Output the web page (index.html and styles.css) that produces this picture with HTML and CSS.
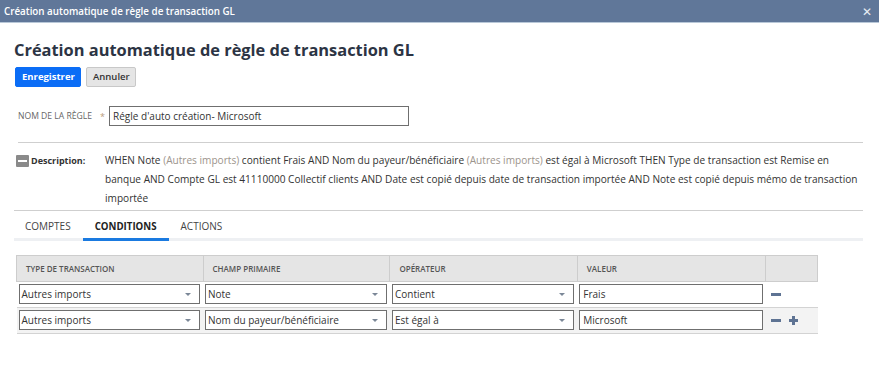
FILE: index.html
```html
<!DOCTYPE html>
<html lang="fr">
<head>
    <meta charset="UTF-8">
    <title>Création automatique de règle de transaction GL</title>
    <link rel="stylesheet" href="styles.css">
</head>
<body>
    <div class="titlebar">
        <span class="titlebar-text">Création automatique de règle de transaction GL</span>
        <span class="close">&#x2715;</span>
    </div>
    <div class="page">
        <h1>Création automatique de règle de transaction GL</h1>
        <div class="buttons">
            <button class="btn btn-primary">Enregistrer</button>
            <button class="btn btn-secondary">Annuler</button>
        </div>

        <div class="field">
            <label class="field-label">NOM DE LA RÈGLE</label>
            <span class="required">*</span>
            <div class="text-input wide">Régle d'auto création- Microsoft</div>
        </div>

        <div class="description">
            <div class="desc-label">
                <span class="collapse-icon"></span>
                <b>Description:</b>
            </div>
            <div class="desc-text">
                WHEN Note <span class="muted">(Autres imports)</span> contient Frais AND Nom du payeur/bénéficiaire <span class="muted">(Autres imports)</span> est égal à Microsoft THEN Type de transaction est Remise en<br>
                banque AND Compte GL est 41110000 Collectif clients AND Date est copié depuis date de transaction importée AND Note est copié depuis mémo de transaction importée
            </div>
        </div>

        <div class="tabs">
            <span class="tab">COMPTES</span>
            <span class="tab active">CONDITIONS</span>
            <span class="tab">ACTIONS</span>
        </div>

        <table class="conditions">
            <thead>
                <tr>
                    <th class="col-type">TYPE DE TRANSACTION</th>
                    <th class="col-field">CHAMP PRIMAIRE</th>
                    <th class="col-op">OPÉRATEUR</th>
                    <th class="col-value">VALEUR</th>
                    <th class="col-tools"></th>
                </tr>
            </thead>
            <tbody>
                <tr>
                    <td><div class="select">Autres imports<span class="caret"></span></div></td>
                    <td><div class="select">Note<span class="caret"></span></div></td>
                    <td><div class="select">Contient<span class="caret"></span></div></td>
                    <td><div class="text-input">Frais</div></td>
                    <td><div class="tools"><span class="icon-minus"></span></div></td>
                </tr>
                <tr class="alt">
                    <td><div class="select">Autres imports<span class="caret"></span></div></td>
                    <td><div class="select">Nom du payeur/bénéficiaire<span class="caret"></span></div></td>
                    <td><div class="select">Est égal à<span class="caret"></span></div></td>
                    <td><div class="text-input">Microsoft</div></td>
                    <td><div class="tools"><span class="icon-minus"></span><span class="icon-plus"></span></div></td>
                </tr>
            </tbody>
        </table>
    </div>
</body>
</html>
```

FILE: styles.css
```css
body {
    margin: 0;
    font-family: "Open Sans", Arial, sans-serif;
    color: #333;
    background: #fff;
}

.titlebar {
    height: 22px;
    background-color: #607799;
    border-bottom: 1px solid #b9c8d8;
    display: flex;
    align-items: center;
    justify-content: space-between;
    padding: 0 7px 0 4px;
    color: #fff;
}

.titlebar-text {
    font-size: 9.8px;
    font-weight: 600;
}

.close {
    font-size: 12px;
    color: #e8edf4;
}

.page {
    padding: 0 16px 0 14px;
}

h1 {
    margin: 16px 0 6px 0;
    font-size: 16.4px;
    font-weight: 700;
    color: #2c3444;
    line-height: 22px;
}

.buttons {
    display: flex;
    gap: 5px;
    margin-left: 1px;
}

.btn {
    font-family: "Open Sans", Arial, sans-serif;
    font-size: 9.5px;
    height: 20px;
    padding: 0 6px;
    border-radius: 2px;
    line-height: 18px;
}

.btn-primary {
    width: 66px;
    background-color: #0b6df6;
    border: 1px solid #0b6df6;
    color: #fff;
    font-weight: 700;
}

.btn-secondary {
    width: 50px;
    background-color: #e5e5e5;
    border: 1px solid #c8c8c8;
    color: #333;
    font-weight: 600;
}

.field {
    display: flex;
    align-items: center;
    margin: 19px 0 0 4px;
    padding-bottom: 16px;
    border-bottom: 1px solid #cfcfcf;
}

.field-label {
    font-size: 8.6px;
    color: #666;
}

.required {
    font-size: 9px;
    color: #b89a7a;
    margin: 0 4px 0 8px;
}

.text-input {
    border: 1px solid #6f6f6f;
    height: 20px;
    line-height: 18px;
    font-size: 10px;
    padding: 0 3px;
    box-sizing: border-box;
    color: #333;
    background: #fff;
}

.text-input.wide {
    width: 300px;
}

.description {
    display: flex;
    padding: 8px 0 2px 2px;
    border-bottom: 1px solid #cfcfcf;
    font-size: 10.1px;
    line-height: 19px;
}

.desc-label {
    display: flex;
    align-items: center;
    width: 89px;
    flex-shrink: 0;
    height: 19px;
}

.desc-label b {
    font-size: 9px;
    font-weight: 700;
    margin-left: 2px;
}

.collapse-icon {
    width: 13px;
    height: 12px;
    background-color: #8a8a8a;
    border-radius: 1px;
    position: relative;
}

.collapse-icon::after {
    content: "";
    position: absolute;
    left: 2px;
    right: 2px;
    top: 5px;
    height: 2px;
    background: #fff;
}

.desc-text {
    color: #333;
}

.muted {
    color: #9c948c;
}

.tabs {
    display: flex;
    border-bottom: 3px solid #eef0f3;
    height: 27px;
    align-items: flex-end;
    padding-left: 1px;
}

.tab {
    font-size: 10px;
    color: #444;
    padding: 0 12px 5px 12px;
    margin-bottom: -3px;
    border-bottom: 3px solid transparent;
}

.tab:first-child {
    padding-left: 10px;
}

.tab.active {
    font-weight: 700;
    font-size: 9.7px;
    color: #222;
    border-bottom-color: #1a7ae0;
}

.conditions {
    border-collapse: collapse;
    margin: 14px 0 0 2px;
    width: 802px;
    font-size: 10px;
}

.conditions th {
    background-color: #e5e5e5;
    border: 1px solid #cdcdcd;
    height: 25px;
    text-align: left;
    font-size: 8px;
    font-weight: 600;
    color: #555;
    padding: 0 0 0 9px;
}

.col-type { width: 178px; }
.col-field { width: 178px; }
.col-op { width: 179px; }
.col-value { width: 180px; }
.col-tools { width: 42px; }

.conditions td {
    padding: 2px 3px 3px 2px;
    border-bottom: 1px solid #d3d3d3;
    height: 20px;
}

.conditions tr.alt td {
    background-color: #f3f3f3;
}

.select {
    position: relative;
    border: 1px solid #6f6f6f;
    height: 20px;
    line-height: 18px;
    box-sizing: border-box;
    padding: 0 2px;
    background: #fff;
    font-size: 10px;
}

.caret {
    position: absolute;
    right: 8px;
    top: 8px;
    width: 0;
    height: 0;
    border-left: 3px solid transparent;
    border-right: 3px solid transparent;
    border-top: 3px solid #7b8797;
}

.tools {
    display: flex;
    align-items: center;
    gap: 8px;
    padding-left: 3px;
    height: 20px;
}

.icon-minus {
    display: inline-block;
    width: 10px;
    height: 3px;
    background-color: #5e7393;
}

.icon-plus {
    display: inline-block;
    width: 9px;
    height: 9px;
    position: relative;
}

.icon-plus::before,
.icon-plus::after {
    content: "";
    position: absolute;
    background-color: #5e7393;
}

.icon-plus::before {
    left: 0;
    right: 0;
    top: 3px;
    height: 3px;
}

.icon-plus::after {
    top: 0;
    bottom: 0;
    left: 3px;
    width: 3px;
}
```
